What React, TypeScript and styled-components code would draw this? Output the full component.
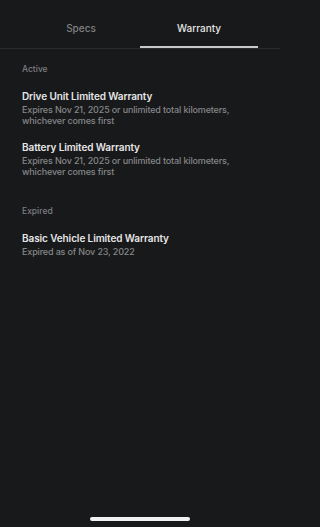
import React, { useState } from "react";
import styled, { createGlobalStyle } from "styled-components";

const GlobalStyle = createGlobalStyle`
    html, body {
        margin: 0;
        padding: 0;
        background: #18191b;
    }
    * {
        box-sizing: border-box;
    }
    body {
        font-family: Inter, "Noto Sans", sans-serif;
        -webkit-font-smoothing: antialiased;
    }
`;

const Screen = styled.div`
    display: flex;
    flex-direction: column;
    width: 280px;
    height: 100vh;
    background: #18191b;
`;

const TabBar = styled.div`
    display: flex;
    padding: 0 22px;
    border-bottom: 1px solid #2b2c2e;
`;

const Tab = styled.button<{ $active: boolean }>`
    flex: 1;
    height: 48px;
    padding: 10px 0 0;
    display: flex;
    align-items: center;
    justify-content: center;
    background: none;
    border: none;
    border-bottom: 2px solid ${({ $active }) => ($active ? "#c9c9c9" : "transparent")};
    font-family: inherit;
    font-size: 10px;
    font-weight: 500;
    color: ${({ $active }) => ($active ? "#e4e4e4" : "#7f8082")};
    cursor: pointer;
`;

const Content = styled.div`
    flex: 1;
    display: flex;
    flex-direction: column;
    gap: 28px;
    padding: 14px 22px 0;
`;

const Section = styled.section`
    display: flex;
    flex-direction: column;
    gap: 13px;
`;

const SectionLabel = styled.div`
    font-size: 8.5px;
    line-height: 12px;
    font-weight: 500;
    color: #7d7e80;
`;

const Item = styled.div`
    display: flex;
    flex-direction: column;
`;

const Title = styled.div`
    font-size: 10px;
    line-height: 16px;
    font-weight: 600;
    letter-spacing: -0.1px;
    color: #e6e6e6;
`;

const Sub = styled.div`
    font-size: 9px;
    line-height: 11px;
    font-weight: 500;
    letter-spacing: -0.15px;
    color: #858688;
`;

const HomeIndicator = styled.div`
    align-self: center;
    width: 100px;
    height: 4px;
    margin-bottom: 6px;
    border-radius: 2px;
    background: #f2f2f2;
`;

const sections = [
    {
        label: "Active",
        items: [
            {
                title: "Drive Unit Limited Warranty",
                sub: ["Expires Nov 21, 2025 or unlimited total kilometers,", "whichever comes first"],
            },
            {
                title: "Battery Limited Warranty",
                sub: ["Expires Nov 21, 2025 or unlimited total kilometers,", "whichever comes first"],
            },
        ],
    },
    {
        label: "Expired",
        items: [
            {
                title: "Basic Vehicle Limited Warranty",
                sub: ["Expired as of Nov 23, 2022"],
            },
        ],
    },
];

const App: React.FC = () => {
    const [tab, setTab] = useState("warranty");

    return <>
        <GlobalStyle />
        <Screen>
            <TabBar>
                <Tab $active={tab === "specs"} onClick={() => setTab("specs")}>Specs</Tab>
                <Tab $active={tab === "warranty"} onClick={() => setTab("warranty")}>Warranty</Tab>
            </TabBar>
            <Content>
                {sections.map((s) => (
                    <Section key={s.label}>
                        <SectionLabel>{s.label}</SectionLabel>
                        {s.items.map((item) => (
                            <Item key={item.title}>
                                <Title>{item.title}</Title>
                                {item.sub.map((line) => <Sub key={line}>{line}</Sub>)}
                            </Item>
                        ))}
                    </Section>
                ))}
            </Content>
            <HomeIndicator />
        </Screen>
    </>;
};

export default App;
